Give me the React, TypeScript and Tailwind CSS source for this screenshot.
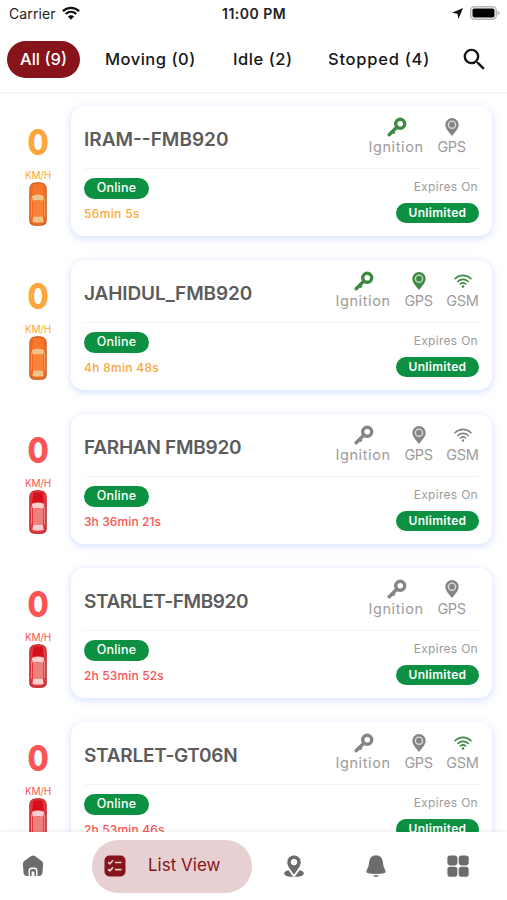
import React from 'react';
import { MdSearch } from 'react-icons/md';

type State = 'idle' | 'stopped';

interface Vehicle {
  name: string;
  nameTracking: string;
  duration: string;
  durationTracking: string;
  state: State;
  ignition: boolean;
  gps: boolean;
  gsm?: boolean;
}

const vehicles: Vehicle[] = [
  { name: 'IRAM--FMB920', nameTracking: 'tracking-[0px]', duration: '56min 5s', durationTracking: 'tracking-[0.35px]', state: 'idle', ignition: true, gps: false },
  { name: 'JAHIDUL_FMB920', nameTracking: 'tracking-[-0.1px]', duration: '4h 8min 48s', durationTracking: 'tracking-[0.3px]', state: 'idle', ignition: true, gps: true, gsm: true },
  { name: 'FARHAN FMB920', nameTracking: 'tracking-[-0.25px]', duration: '3h 36min 21s', durationTracking: 'tracking-[0.1px]', state: 'stopped', ignition: false, gps: false, gsm: false },
  { name: 'STARLET-FMB920', nameTracking: 'tracking-[-0.4px]', duration: '2h 53min 52s', durationTracking: 'tracking-[0.15px]', state: 'stopped', ignition: false, gps: false },
  { name: 'STARLET-GT06N', nameTracking: 'tracking-[-0.25px]', duration: '2h 53min 46s', durationTracking: 'tracking-[0.15px]', state: 'stopped', ignition: false, gps: false, gsm: true },
];

const KeyIcon = () => (
  <svg className="ml-[2px]" width="20" height="20" viewBox="0 0 20 20" fill="none" stroke="currentColor">
    <circle cx="13.2" cy="6.8" r="4.5" strokeWidth="3.4" />
    <path d="M10 10 2.2 17.8" strokeWidth="3.4" strokeLinecap="round" />
    <path d="M5.4 14.2l2.2 2.2" strokeWidth="2.4" />
  </svg>
);

const PinIcon = () => (
  <svg width="14" height="18" viewBox="0 0 14 18">
    <path fill="currentColor" d="M7 0a6.7 6.7 0 0 0-6.7 6.7C.3 11 4.6 14.5 7 18c2.4-3.5 6.7-7 6.7-11.3A6.7 6.7 0 0 0 7 0z" />
    <circle cx="7" cy="6.7" r="3.6" fill="none" stroke="#fff" strokeOpacity=".7" strokeWidth="1.4" />
  </svg>
);

const SignalIcon = () => (
  <svg width="18" height="14" viewBox="0 0 18 14" fill="none" stroke="currentColor" strokeWidth="1.6" strokeLinecap="round">
    <path d="M1 4.7c4.6-4.5 11.4-4.5 16 0" />
    <path d="M3.8 7.5c3-2.9 7.4-2.9 10.4 0" />
    <path d="M6.4 10c1.5-1.4 3.7-1.4 5.2 0" />
    <circle cx="9" cy="12.5" r="1.2" fill="currentColor" stroke="none" />
  </svg>
);

const Car = ({ state }: { state: State }) => {
  const idle = state === 'idle';
  const body = idle ? '#f26a21' : '#e4383c';
  const edge = idle ? '#c46534' : '#b32c36';
  const roof = idle ? '#fb8237' : '#ee827b';
  const glass = idle ? '#f3c489' : '#fbcfd0';
  return (
    <svg width="18" height="44" viewBox="0 0 18 44">
      <path d="M3.2 1.5Q9-.5 14.8 1.5 17.3 3 17.3 7v32q0 3-2.6 4-5.7 1.2-11.4 0Q.7 42 .7 39V7q0-4 2.5-5.500z" fill={body} stroke={edge} strokeWidth=".9" />
      <path d="M4.5 2.500h9l1.300 10H3.200z" fill={idle ? '#f9792c' : '#d3101c'} />
      <path d="M2.800 14q6.200-3 12.400 0l-1 4.800q-5.200-1.300-10.400 0z" fill={glass} />
      <rect x="4" y="18.700" width="10" height="15.300" fill={roof} />
      <path d="M2.500 16.500v18M15.500 16.500v18" stroke={glass} strokeWidth=".8" strokeOpacity=".7" />
      <path d="M4.200 34.500h9.600l.8 5.500q-5.600 1.500-11.200 0z" fill={glass} />
      <path d="M1.500 39v2l3 1.500M16.500 39v2l-3 1.500" stroke={edge} fill="none" />
    </svg>
  );
};

interface IndicatorProps {
  label: string;
  active: boolean;
  width: string;
  tracking: string;
  children: React.ReactNode;
}

const Indicator = ({ label, active, width, tracking, children }: IndicatorProps) => (
  <div className={`flex flex-col items-center ${width}`}>
    <div className={`flex h-5 items-center justify-center ${active ? 'text-[#3f8a43]' : 'text-[#858585]'}`}>
      {children}
    </div>
    <span className={`text-[14.5px] leading-[20px] whitespace-nowrap text-[#9c9c9c] ${tracking}`}>{label}</span>
  </div>
);

const VehicleRow = ({ vehicle }: { vehicle: Vehicle }) => {
  const color = vehicle.state === 'idle' ? 'text-[#fda63a]' : 'text-[#fc5355]';
  return (
    <div className="flex h-[130px] shrink-0">
      <div className={`w-[71px] pl-[13px] pt-[18px] ${color}`}>
        <div className="flex w-[50px] flex-col items-center">
          <span className="scale-x-[0.88] text-[35px] font-extrabold leading-[37px]">0</span>
          <span className="mt-[8px] text-[10px] leading-[13px] tracking-[-0.2px]">KM/H</span>
          <Car state={vehicle.state} />
        </div>
      </div>
      <div className="w-[421px] rounded-[13px] bg-white px-[13px] shadow-[0_2px_7px_1px_rgba(190,210,255,0.6)]">
        <div className="flex h-[63px] justify-between border-b border-[#f4f4f4]">
          <h2 className={`pt-[20px] text-[19px] font-semibold leading-[27px] whitespace-nowrap text-[#5c5c5c] ${vehicle.nameTracking}`}>
            {vehicle.name}
          </h2>
          <div className="flex gap-[13px] pt-[11px]">
            <Indicator label="Ignition" active={vehicle.ignition} width="w-[56px]" tracking="tracking-[0.6px]">
              <KeyIcon />
            </Indicator>
            <Indicator label="GPS" active={vehicle.gps} width="w-[29px]" tracking="tracking-[-0.4px]">
              <PinIcon />
            </Indicator>
            {vehicle.gsm === undefined ? (
              <div />
            ) : (
              <Indicator label="GSM" active={vehicle.gsm} width="w-[33px]" tracking="tracking-[-0.3px]">
                <SignalIcon />
              </Indicator>
            )}
          </div>
        </div>
        <div className="flex justify-between">
          <div className="flex flex-col items-start pt-[9px]">
            <span className="flex h-[21px] w-[65px] items-center justify-center rounded-full bg-[#0c9143] text-[12.5px] font-medium tracking-[0.2px] text-white">
              Online
            </span>
            <span className={`mt-[7px] text-[12px] font-medium leading-[16px] ${color} ${vehicle.durationTracking}`}>{vehicle.duration}</span>
          </div>
          <div className="flex flex-col items-end pt-[9px]">
            <span className="pr-[1px] text-[12px] leading-[17px] tracking-[0.3px] text-[#9c9c9c]">Expires On</span>
            <span className="mt-[8px] flex h-[20px] w-[83px] items-center justify-center rounded-full bg-[#0c9143] text-[12px] font-semibold tracking-[0.3px] text-white">
              Unlimited
            </span>
          </div>
        </div>
      </div>
    </div>
  );
};

const StatusBar = () => (
  <div className="flex h-[27px] shrink-0 items-center pl-[9px] pr-[7px] text-[14px] text-[#222]">
    <div className="flex w-[213px] items-center gap-[6px]">
      <span className="tracking-[0.1px]">Carrier</span>
      <svg className="-mt-[1px]" width="18" height="14" viewBox="0 0 18 14" fill="none" stroke="#111" strokeWidth="2.3">
        <path d="M.9 5.100c4.700-4.400 11.500-4.400 16.200 0" />
        <path d="M3.700 8c3.100-2.900 7.500-2.900 10.600 0" />
        <path d="M9 13.800 5.900 10.600q3.100-2.500 6.200 0z" fill="#111" stroke="none" />
      </svg>
    </div>
    <span className="font-semibold tracking-[0.5px]">11:00 PM</span>
    <div className="ml-auto -mt-px flex items-center gap-[7px]">
      <svg width="11" height="11" viewBox="0 0 10 10"><path d="M10 0 5.800 10 5 5.200 0 4.300z" fill="#111" /></svg>
      <svg width="30" height="14" viewBox="0 0 30 14">
        <rect x=".7" y=".7" width="25.600" height="12.600" rx="3.700" fill="#fff" stroke="#b5b5b5" strokeWidth="1.400" />
        <rect x="2.500" y="2.500" width="22" height="9" rx="1.800" fill="#000" />
        <path d="M27.700 4.800q2 .6 2 2.200t-2 2.200z" fill="#b5b5b5" />
      </svg>
    </div>
  </div>
);

const Tabs = () => (
  <div className="flex h-[67px] shrink-0 items-start border-b-2 border-[#f5f5f5] pl-[7px] pt-[14px] text-[16.5px] font-medium text-[#161616]">
    <span className="flex h-[37px] w-[73px] items-center justify-center rounded-full bg-[#86141a] whitespace-nowrap text-white">All (9)</span>
    <span className="ml-[25px] w-[91px] leading-[36px] whitespace-nowrap tracking-[0.5px]">Moving (0)</span>
    <span className="ml-[37px] w-[59px] leading-[36px] whitespace-nowrap tracking-[0.55px]">Idle (2)</span>
    <span className="ml-[36px] w-[102px] leading-[36px] whitespace-nowrap tracking-[0.75px]">Stopped (4)</span>
    <MdSearch className="ml-[30px] mt-[4px] size-[29px]" />
  </div>
);

const BottomNav = () => (
  <nav className="z-10 flex h-[68px] shrink-0 items-center bg-white pl-[22px] text-[#6c6c6c] shadow-[0_-1px_4px_rgba(0,0,0,0.07)]">
    <svg width="22" height="22" viewBox="0 0 22 22">
      <path fill="currentColor" d="M8.800 1.300q2.200-1.500 4.400 0l6.500 4.700q1.600 1.300 1.400 3.500l-.6 7.700q-.3 3.800-3.600 3.800h-1.400v-5.300q0-3.300-3.300-3.300h-2.400q-3.300 0-3.300 3.300V21H5.100q-3.300 0-3.600-3.800L.9 9.500Q.7 7.300 2.300 6z" />
      <path fill="currentColor" d="M7.900 21v-4.800q0-2.200 2.100-2.200h2q2.100 0 2.100 2.200V21h-1.700v-4.500H9.600V21z" />
    </svg>
    <div className="ml-[48px] flex h-[53px] w-[160px] items-center rounded-full bg-[#e6d0d1] pl-[12px] text-[#86141a]">
      <svg width="22" height="22" viewBox="0 0 22 22">
        <rect x=".5" y=".5" width="21" height="21" rx="5" fill="#86141a" />
        <g stroke="#e6d0d1" strokeWidth="1.600" strokeLinecap="round" strokeLinejoin="round" fill="none">
          <path d="M4.500 7.500 5.900 8.800 8.600 5.800M11.500 7.500h5.500M4.500 14.600l1.400 1.300 2.700-3M11.500 14.600h5.500" />
        </g>
      </svg>
      <span className="ml-[22px] text-[17px] whitespace-nowrap">List View</span>
    </div>
    <svg className="ml-[32px]" width="20" height="22" viewBox="0 0 20 22">
      <path fill="currentColor" d="M4.500 15.200 8.800 21q.5.700 1.200.7t1.200-.7l4.300-5.800q4.300.8 4.300 3.200 0 3.400-9.800 3.400T.2 18.400q0-2.400 4.300-3.200z" />
      <path fill="currentColor" stroke="#fff" strokeWidth="1" fillRule="evenodd" d="M10-.1a7.200 7.200 0 0 0-7.200 7.200c0 4.500 3.200 7 6 11.900q1.200 1.500 2.400 0c2.800-4.900 6-7.400 6-11.900A7.200 7.200 0 0 0 10-.1zm0 4.400a2.800 2.800 0 1 1 0 5.600 2.800 2.800 0 0 1 0-5.600z" />
    </svg>
    <svg className="ml-[61px]" width="22" height="22" viewBox="0 0 22 22" fill="currentColor">
      <path d="M11 .3q5.900.2 6.800 6.500.3 4.700 1.900 7.300 1.900 3.200-.2 3.900Q16.500 19 11 19t-8.500-1q-2.100-.7-.2-3.900 1.600-2.600 1.900-7.300Q5.100.5 11 .3z" />
      <path d="M7.800 20.200h6.400q-1.200 1.700-3.200 1.700t-3.200-1.700z" />
    </svg>
    <svg className="ml-[60px]" width="22" height="22" viewBox="0 0 22 22" fill="currentColor">
      <rect x=".4" y=".4" width="10" height="10" rx="2.800" />
      <rect x="11.700" y=".4" width="10" height="10" rx="2.800" />
      <rect x=".4" y="11.700" width="10" height="10" rx="2.800" />
      <rect x="11.700" y="11.700" width="10" height="10" rx="2.800" />
    </svg>
  </nav>
);

export default function App() {
  return (
    <div className="flex h-[900px] w-[507px] flex-col overflow-hidden bg-white font-[Inter,sans-serif]">
      <StatusBar />
      <Tabs />
      <main className="flex min-h-0 flex-1 flex-col gap-[24px] overflow-hidden pt-[12px]">
        {vehicles.map((vehicle) => (
          <VehicleRow key={vehicle.name} vehicle={vehicle} />
        ))}
      </main>
      <BottomNav />
    </div>
  );
}
